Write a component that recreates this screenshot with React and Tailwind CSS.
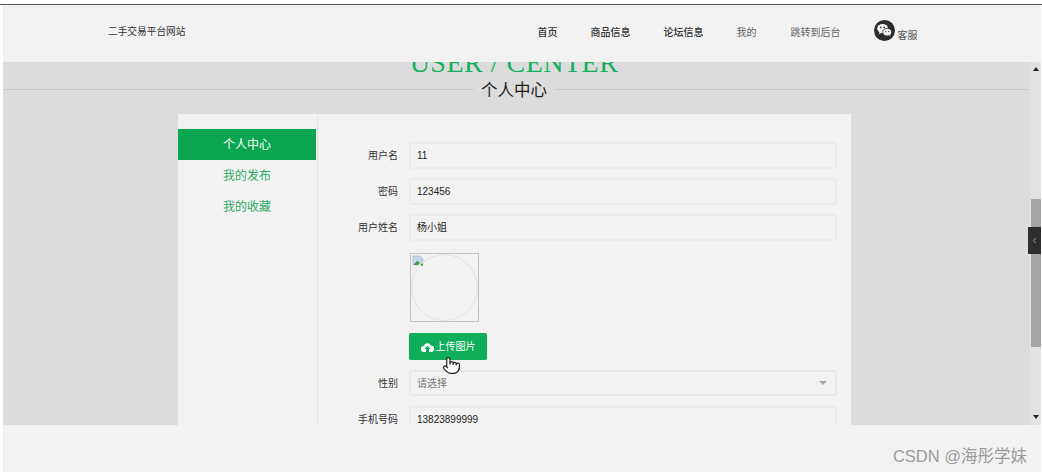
import { ChevronLeft, Pointer } from 'lucide-react'

const font = { cjk: "font-['Liberation_Sans','Noto_Sans_CJK_SC',sans-serif]" }

function WechatIcon() {
  return (
    <svg width="21" height="21" viewBox="0 0 21 21" className="shrink-0 -mt-[4px]">
      <circle cx="10.5" cy="10.5" r="10.5" fill="#2b2b2b" />
      <ellipse cx="8.6" cy="8.6" rx="5.4" ry="4.6" fill="#f2f2f2" />
      <path d="M5.6 11.5 L5 14.2 L8 12.6 Z" fill="#f2f2f2" />
      <ellipse cx="13.2" cy="12.2" rx="4.4" ry="3.7" fill="#f2f2f2" stroke="#2b2b2b" strokeWidth="0.8" />
      <path d="M15 15 L16.4 16.6 L16 14.4 Z" fill="#f2f2f2" />
      <circle cx="6.8" cy="7.4" r="0.8" fill="#2b2b2b" />
      <circle cx="10.2" cy="7.4" r="0.8" fill="#2b2b2b" />
      <circle cx="11.8" cy="11.6" r="0.6" fill="#2b2b2b" />
      <circle cx="14.7" cy="11.6" r="0.6" fill="#2b2b2b" />
    </svg>
  )
}

function BrokenImage() {
  return (
    <svg width="12" height="12" viewBox="0 0 12 12" className="absolute left-[1px] top-[1px]">
      <path d="M1 1 H8 L11 4 V6 L6 10 H1 Z" fill="#c6d5ec" stroke="#9aa7bb" strokeWidth="0.6" />
      <path d="M1.5 10 L5 6 L8 8 L5.5 10 Z" fill="#3f9b3a" />
      <path d="M8 10 L11 8 V11 Z" fill="#3f9b3a" />
    </svg>
  )
}

function CloudUpload() {
  return (
    <svg width="13" height="10" viewBox="0 0 13 10" className="shrink-0">
      <path d="M3 10 A3 3 0 0 1 2.6 4 A4 4 0 0 1 10 3.6 A3.2 3.2 0 0 1 10 10 H8 V7 H9.6 L6.5 3.8 L3.4 7 H5 V10 Z" fill="#fff" />
    </svg>
  )
}

function Field({ label, value, className = '' }) {
  return (
    <div className={`flex items-center shrink-0 ${className}`}>
      <div className="w-[91px] pr-[11px] text-right text-[10px] text-[#333]">{label}</div>
      <div className="w-[428px] h-[27px] shrink-0 border-2 border-[#ebebeb] rounded-[2px] px-[6px] flex items-center text-[10px] text-[#222]">{value}</div>
    </div>
  )
}

function NavLink({ children, className = 'text-[#333]' }) {
  return <span className={`text-[10px] font-medium ${className}`}>{children}</span>
}

export default function App() {
  return (
    <div className={`w-[1042px] h-[474px] bg-white overflow-hidden relative ${font.cjk}`}>
      <div className="h-[4px] bg-white" />
      <div className="h-[1px] bg-[#555]" />

      {/* Top nav */}
      <header className="h-[57px] ml-[3px] mr-[1px] bg-[#f2f2f2] flex items-center">
        <span className="ml-[105px] text-[9.7px] text-[#333] -mt-[3px]">二手交易平台网站</span>
        <nav className="ml-[352px] flex items-center -mt-[3px]">
          <NavLink>首页</NavLink>
          <span className="w-[33px]" />
          <NavLink>商品信息</NavLink>
          <span className="w-[33px]" />
          <NavLink>论坛信息</NavLink>
          <span className="w-[33px]" />
          <NavLink className="text-[#666] font-normal">我的</NavLink>
          <span className="w-[34px]" />
          <NavLink className="text-[#666] font-normal">跳转到后台</NavLink>
          <span className="w-[33px]" />
          <WechatIcon />
          <span className="ml-[3px] mt-[6px] text-[10px] text-[#555]">客服</span>
        </nav>
      </header>

      {/* Page content, scrolled inside the frame */}
      <div className="h-[363px] ml-[3px] mr-[1px] flex bg-[#dcdcdc] overflow-hidden">
        <main className="w-[1027px] shrink-0 overflow-hidden">
          <div className="h-[16px] overflow-hidden flex justify-center pr-[5px]">
            <div className="-mt-[15px] h-[31px] leading-[31px] text-[28px] tracking-[0.5px] text-[#14b060] font-['Liberation_Serif',serif]">USER / CENTER</div>
          </div>
          <div className="h-[22px] flex items-center">
            <div className="w-[471px] h-[1px] bg-[#c8c8c8]" />
            <div className="ml-[7px] text-[16.5px] leading-[22px] pt-[1px] text-[#1c1c1c]">个人中心</div>
            <div className="ml-[7px] flex-1 mr-[1px] h-[1px] bg-[#c8c8c8]" />
          </div>

          <div className="mt-[14px] ml-[175px] w-[673px] h-[311px] bg-[#f2f2f2] flex">
            <aside className="w-[140px] shrink-0 border-r border-[#e6e6e6] pt-[15px]">
              <div className="h-[31px] w-[138px] bg-[#0aa650] text-white text-[12px] flex items-center justify-center">个人中心</div>
              <div className="h-[30px] w-[138px] pt-[1px] text-[#2fa866] text-[12px] flex items-center justify-center">我的发布</div>
              <div className="h-[31px] w-[138px] pt-[3px] text-[#2fa866] text-[12px] flex items-center justify-center">我的收藏</div>
            </aside>
            <section className="pt-[28px] flex flex-col">
              <Field label="用户名" value="11" />
              <Field label="密码" value="123456" className="mt-[9px]" />
              <Field label="用户姓名" value="杨小姐" className="mt-[9px]" />
              <div className="ml-[92px] mt-[12px] w-[69px] h-[69px] shrink-0 border border-[#c4c4c4] relative">
                <div className="absolute inset-0 rounded-full border border-[#e2e2e2]" />
                <BrokenImage />
              </div>
              <button className="ml-[91px] mt-[11px] w-[78px] h-[27px] shrink-0 bg-[#0fae58] rounded-[2px] text-white text-[10px] flex items-center justify-center gap-[2px]">
                <CloudUpload />
                <span>上传图片</span>
              </button>
              <div className="mt-[10px] shrink-0 flex items-center">
                <div className="w-[91px] pr-[11px] text-right text-[10px] text-[#333]">性别</div>
                <div className="w-[428px] h-[26px] shrink-0 border-2 border-[#e8e8e8] rounded-[2px] px-[6px] flex items-center justify-between text-[10px] text-[#777]">
                  <span>请选择</span>
                  <span className="w-0 h-0 mr-[2px] border-x-[4px] border-x-transparent border-t-[4px] border-t-[#a8a8a8]" />
                </div>
              </div>
              <Field label="手机号码" value="13823899999" className="mt-[10px]" />
            </section>
          </div>
        </main>

        {/* Scrollbar */}
        <div className="w-[11px] shrink-0 bg-[#e2e2e2] flex flex-col items-center relative">
          <span className="mt-[5px] w-0 h-0 border-x-[3px] border-x-transparent border-b-[4px] border-b-[#222]" />
          <div className="mt-[128px] ml-[1px] w-[10px] h-[148px] bg-[#a6a6a6]" />
          <span className="mt-[68px] w-0 h-0 border-x-[3px] border-x-transparent border-t-[4px] border-t-[#222]" />
        </div>
      </div>

      {/* Footer strip */}
      <footer className="h-[47px] ml-[3px] mr-[1px] bg-[#f2f2f2] flex items-start justify-end pr-[14px]">
        <span className="mt-[20px] text-[16.5px] leading-[22px] text-[#9a9a9a]">CSDN @海彤学妹</span>
      </footer>

      {/* Side tab over the scrollbar */}
      <div className="absolute left-[1028px] top-[227px] w-[13px] h-[27px] bg-[#2e2e2e] flex items-center justify-center">
        <ChevronLeft size={9} color="#bbb" />
      </div>

      {/* Mouse cursor */}
      <div className="absolute left-[442px] top-[356px]">
        <Pointer size={19} color="#222" fill="#fff" strokeWidth={1.5} />
      </div>
    </div>
  )
}
